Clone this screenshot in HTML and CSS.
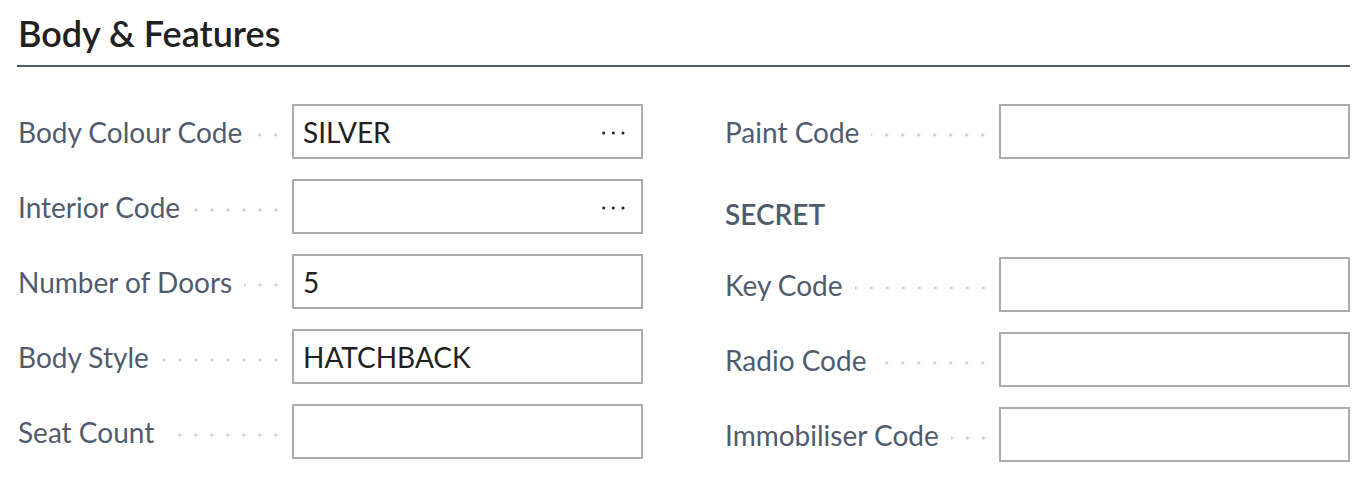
FILE: index.html
```html
<!DOCTYPE html>
<html lang="en">
<head>
<meta charset="utf-8">
<title>Body &amp; Features</title>
<link rel="stylesheet" href="styles.css">
</head>
<body>
<section class="group">
  <h2 class="group-title">Body &amp; Features</h2>
  <div class="columns">
    <div class="col">
      <div class="field">
        <label class="field-label"><span class="label-text">Body Colour Code</span><span class="dots"></span></label>
        <div class="input"><span class="value">SILVER</span><svg class="more" width="24" height="4" viewBox="0 0 24 4"><circle cx="1.7" cy="2" r="1.5"/><circle cx="11.3" cy="2" r="1.5"/><circle cx="21" cy="2" r="1.5"/></svg></div>
      </div>
      <div class="field">
        <label class="field-label"><span class="label-text">Interior Code</span><span class="dots"></span></label>
        <div class="input"><span class="value"></span><svg class="more" width="24" height="4" viewBox="0 0 24 4"><circle cx="1.7" cy="2" r="1.5"/><circle cx="11.3" cy="2" r="1.5"/><circle cx="21" cy="2" r="1.5"/></svg></div>
      </div>
      <div class="field">
        <label class="field-label"><span class="label-text">Number of Doors</span><span class="dots"></span></label>
        <div class="input"><span class="value">5</span></div>
      </div>
      <div class="field">
        <label class="field-label"><span class="label-text">Body Style</span><span class="dots"></span></label>
        <div class="input"><span class="value">HATCHBACK</span></div>
      </div>
      <div class="field">
        <label class="field-label"><span class="label-text">Seat Count</span><span class="dots"></span></label>
        <div class="input"><span class="value"></span></div>
      </div>
    </div>
    <div class="col">
      <div class="field">
        <label class="field-label"><span class="label-text">Paint Code</span><span class="dots"></span></label>
        <div class="input"><span class="value"></span></div>
      </div>
      <h3 class="subhead">SECRET</h3>
      <div class="field">
        <label class="field-label"><span class="label-text">Key Code</span><span class="dots"></span></label>
        <div class="input"><span class="value"></span></div>
      </div>
      <div class="field">
        <label class="field-label"><span class="label-text">Radio Code</span><span class="dots"></span></label>
        <div class="input"><span class="value"></span></div>
      </div>
      <div class="field">
        <label class="field-label"><span class="label-text">Immobiliser Code</span><span class="dots"></span></label>
        <div class="input"><span class="value"></span></div>
      </div>
    </div>
  </div>
</section>
</body>
</html>
```

FILE: styles.css
```css
html, body {
  margin: 0;
  padding: 0;
  background: #ffffff;
}

body {
  font-family: Lato, "Open Sans", "Noto Sans", sans-serif;
  color: #505c6d;
}

.group {
  padding: 0 21px 0 17px;
}

.group-title {
  margin: 0;
  padding: 10px 0 9px 1px;
  font-size: 36px;
  line-height: 46px;
  font-weight: 600;
  color: #212121;
  border-bottom: 2px solid #505a6b;
}

.columns {
  display: grid;
  grid-template-columns: 1fr 1fr;
  column-gap: 81px;
  margin-top: 37px;
}

.col {
  display: flex;
  flex-direction: column;
}

.field {
  display: grid;
  grid-template-columns: 275px 1fr;
  height: 55px;
  margin-bottom: 20px;
}

.field-label {
  display: flex;
  align-items: center;
  padding-right: 8px;
  padding-left: 1px;
  font-size: 28px;
  line-height: 34px;
  white-space: nowrap;
  min-width: 0;
}

.label-text {
  flex: none;
}

.dots {
  flex: 1;
  height: 4px;
  margin-left: 12px;
  margin-top: 6px;
  background-image: radial-gradient(circle at 8px 2px, #cdd1d6 1.3px, transparent 1.9px);
  background-size: 16px 4px;
  background-repeat: repeat-x;
  background-position: right center;
}

.input {
  display: flex;
  align-items: center;
  box-sizing: border-box;
  height: 55px;
  border: 2px solid #acacac;
  padding: 0 15px 0 9px;
  background: #fff;
}

.value {
  flex: 1;
  font-size: 28px;
  color: #212121;
  white-space: nowrap;
}

.more {
  flex: none;
  fill: #222222;
  margin-top: 2px;
}

.subhead {
  margin: 20px 0 28px 1px;
  font-size: 28px;
  line-height: 30px;
  font-weight: 600;
  color: #505c6d;
}
```
